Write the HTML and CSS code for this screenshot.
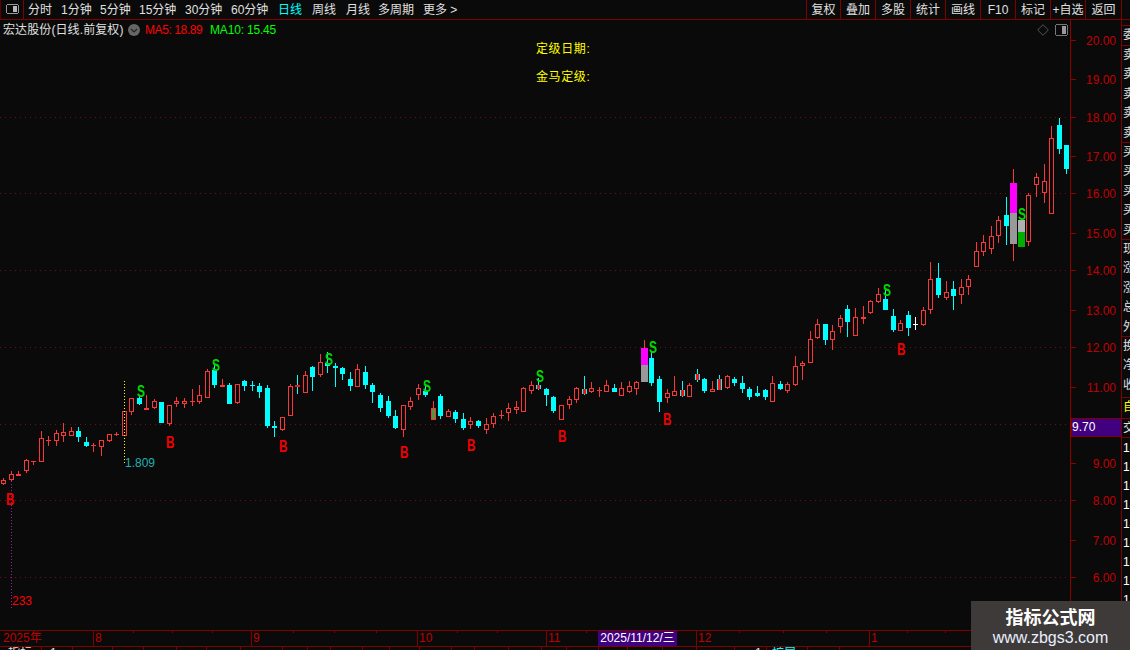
FILE: index.html
```html
<!DOCTYPE html>
<html lang="zh-CN">
<head>
<meta charset="utf-8">
<title>宏达股份 日线</title>
<link rel="stylesheet" href="styles.css">
</head>
<body>
<div class="page">
  <header class="toolbar">
    <div class="toggle-cell">
      <svg class="toggle" width="13" height="10" viewBox="0 0 13 10"><rect x="0.5" y="0.5" width="12" height="9" rx="2" fill="none" stroke="#999"/><rect x="7" y="2" width="4" height="6" fill="#b8b8b8"/></svg>
    </div>
    <nav class="periods">
      <span>分时</span><span>1分钟</span><span>5分钟</span><span>15分钟</span><span>30分钟</span><span>60分钟</span><span class="active">日线</span><span>周线</span><span>月线</span><span>多周期</span><span>更多 &gt;</span>
    </nav>
    <nav class="actions">
      <span>复权</span><span>叠加</span><span>多股</span><span>统计</span><span>画线</span><span>F10</span><span>标记</span><span>+自选</span><span>返回</span>
    </nav>
  </header>
  <div class="body">
    <div class="left">
      <main class="chart">
        <svg id="canvas" class="canvas" width="1121" height="610" viewBox="0 20 1121 610"></svg>
        <div class="legend">
          <span class="name">宏达股份(日线.前复权)</span>
          <svg class="drop" width="12" height="12" viewBox="0 0 12 12"><circle cx="6" cy="6" r="6" fill="#666"/><path d="M3 5l3 3 3-3" fill="none" stroke="#222" stroke-width="1.2"/></svg>
          <span class="ma5">MA5: 18.89</span>
          <span class="ma10">MA10: 15.45</span>
        </div>
        <div class="notes">
          <p>定级日期:</p>
          <p>金马定级:</p>
        </div>
        <div class="chart-tools">
          <svg width="12" height="12" viewBox="0 0 12 12"><path d="M6 .7L11.3 6 6 11.3 .7 6z" fill="none" stroke="#555"/></svg>
          <svg width="13" height="12" viewBox="0 0 13 12"><rect x="0.5" y="0.5" width="12" height="11" rx="2" fill="none" stroke="#777"/><rect x="7" y="2" width="4" height="8" fill="#999"/></svg>
        </div>
      </main>
      <div class="time">
        <span class="cell first">2025年</span><span class="cell">8</span><span class="cell">9</span><span class="cell">10</span><span class="cell">11</span><span class="cell now">2025/11/12/三</span><span class="cell blank"></span><span class="cell">12</span><span class="cell">1</span>
        <svg id="ticks" class="ticks" width="1121" height="3"></svg>
      </div>
      <div class="tabs">
        <span>指标</span><span>1</span><span></span><span></span><span></span><span></span><span></span><span></span><span></span><span></span><span></span><span></span><span></span><span></span><span></span><span></span><span></span><span></span><span></span><span></span><span></span><span></span><span></span><span class="tip">1</span><span class="cy">扩展</span><span></span>
      </div>
    </div>
    <aside class="side">
      <div class="sec s0"></div>
      <div class="sec s1"><p>委比</p></div>
      <div class="sec s2"><p>卖五</p><p>卖四</p><p>卖三</p><p>卖二</p><p>卖一</p></div>
      <div class="sec s2"><p>买一</p><p>买二</p><p>买三</p><p>买四</p><p>买五</p></div>
      <div class="sec s2"><p>现价</p><p>涨跌</p><p>涨幅</p><p>总手</p><p>外盘</p></div>
      <div class="sec s3"><p>换手</p><p>净资</p><p>收益</p></div>
      <div class="sec s4"><p class="yl">自选</p></div>
      <div class="sec s5"><p>交易</p></div>
      <div class="list"><p>14:50</p><p>14:51</p><p>14:52</p><p>14:53</p><p>14:54</p><p>14:55</p><p>14:56</p><p>14:57</p><p>14:58</p><p>14:59</p></div>
    </aside>
  </div>
  <div class="mark">
    <strong>指标公式网</strong>
    <span>www.zbgs3.com</span>
  </div>
</div>
<script src="chart.js"></script>
</body>
</html>
```
FILE: styles.css
```css
* { box-sizing: border-box; }
html, body { margin: 0; padding: 0; background: #0a0a0a; }
body { font: 12px/1 "Liberation Sans", "Noto Sans CJK SC", sans-serif; color: #e0e0e0; overflow: hidden; }
p { margin: 0; }
.page { position: relative; width: 1130px; height: 650px; overflow: hidden; }

.toolbar { display: flex; height: 20px; border-bottom: 1px solid #800000; }
.toggle-cell { width: 24px; display: flex; align-items: center; justify-content: center; padding-bottom: 1px; border-left: 1px solid #600000; border-right: 1px solid #800000; }
.periods { display: grid; grid-template-columns: 33px 39px 39px 46px 46px 47px 34px 34px 32px 45px 40px; margin-left: 4px; line-height: 20px; }
.periods .active { color: #00ffff; }
.actions { display: grid; grid-template-columns: 34px 35px 35px 35px 35px 35px 35px 35px 37px; margin-left: auto; margin-right: 8px; line-height: 20px; text-align: center; }
.actions span { border-left: 1px solid #800000; white-space: nowrap; }
.actions span:last-child { border-right: 1px solid #800000; }

.body { display: flex; height: 630px; }
.left { width: 1121px; }
.chart { position: relative; height: 610px; }
.canvas { position: absolute; left: 0; top: 0; }
.legend { position: relative; display: flex; align-items: center; height: 19px; padding-left: 3px; }
.name { width: 125px; white-space: nowrap; letter-spacing: .1px; }
.drop { margin-right: 5px; }
.ma5 { width: 65px; color: #ff0000; white-space: nowrap; letter-spacing: -.4px; }
.ma10 { color: #00ff00; letter-spacing: -.18px; white-space: nowrap; }
.notes { position: relative; margin: 4px 0 0 536px; color: #ffff00; line-height: 12px; letter-spacing: .6px; }
.notes p + p { margin-top: 16px; }
.chart-tools { position: absolute; top: 4px; left: 1037px; display: flex; gap: 6px; }

.time { position: relative; display: grid; grid-template-columns: 93px 158px 166px 129px 52px 79px 19px 173px 252px; height: 17px; border-top: 1px solid #800000; border-bottom: 1px solid #800000; color: #c00000; line-height: 15px; }
.cell { border-left: 1px solid #800000; padding-left: 1px; }
.cell.first { border-left: 0; padding-left: 3px; }
.cell.now { background: #400080; color: #fff; text-align: center; padding: 0; white-space: nowrap; border: 0; }
.cell.blank { border-left: 0; }
.ticks { position: absolute; left: 0; top: 0; }

.tabs { display: grid; grid-template-columns: 42px 31px 40px 31px 33px 30px 34px 42px 25px 23px 32px 27px 30px 32px 23px 34px 33px 25px 32px 29px 35px 34px 38px 32px 41px 32px 31px; height: 3px; overflow: hidden; line-height: 13px; }
.tabs span { border-right: 1px solid #800000; padding-left: 8px; white-space: nowrap; overflow: hidden; }
.tabs .tip { padding-left: 20px; }
.tabs .cy { color: #00ffff; padding-left: 5px; }

.side { width: 9px; height: 630px; border-left: 1px solid #800000; overflow: hidden; line-height: 19.4px; padding-left: 1px; white-space: nowrap; }
.sec { border-bottom: 1px solid #800000; overflow: hidden; margin-left: -1px; padding-left: 1px; }
.s0 { height: 6px; }
.s1 { height: 20px; }
.s2 { height: 97px; }
.s3 { height: 61px; }
.s4 { height: 21px; }
.s5 { height: 19px; }
.yl { color: #ffff00; }
.list { line-height: 19px; color: #fff; padding-top: 1px; }

.mark { position: absolute; left: 971px; top: 601px; width: 159px; height: 49px; background: #3f3a3a; color: #fff; text-align: center; }
.mark strong { display: block; margin-top: 5px; font-size: 18px; line-height: 20px; font-family: "Noto Sans CJK SC", sans-serif; }
.mark span { display: block; margin-top: 2px; font-size: 16px; line-height: 20px; color: #e8f0ff; }
```
FILE: chart.js
```js
// kind, bodyTop, bodyBottom, wickTop, wickBottom (screen y)
var D = [
['r',480,484,478,485],['r',474,480,471,481],['f',474,476,471,476],['r',460,471,459,473],['f',461,462,461,465],
['r',438,462,431,462],['f',440,441,436,446],['r',433,441,430,446],['r',432,436,423,442],['r',431,436,427,436],
['c',431,437,427,442],['c',442,446,437,447],['f',445,446,443,452],['r',440,447,440,456],['r',434,441,434,442],
['f',434,435,432,436],['r',411,436,411,436],['r',398,412,398,415],['c',398,404,396,405],['f',408,410,395,410],
['r',401,408,399,409],['c',402,423,402,423],['r',405,424,405,426],['r',401,404,397,407],['r',401,404,398,408],
['f',401,402,389,406],['r',395,402,385,404],['r',371,398,369,398],['c',370,385,365,388],['f',385,387,379,387],
['c',385,404,383,404],['r',384,403,384,404],['c',381,386,380,391],['c',385,386,381,391],['c',386,392,383,398],
['c',388,426,385,428],['c',426,428,421,437],['r',417,430,417,431],['r',386,416,384,416],['p',385,387,375,394],
['r',375,393,371,393],['c',367,377,366,391],['r',362,375,354,377],['c',363,366,352,373],['c',366,368,363,387],
['c',368,374,367,380],['c',379,386,372,391],['r',369,387,364,387],['c',372,385,366,389],['c',385,392,383,403],
['c',395,408,393,412],['c',401,416,396,418],['c',416,428,410,429],['r',405,430,405,437],['r',401,407,397,410],
['r',388,395,384,400],['c',391,395,386,397],['g',408,420,401,420],['c',396,416,394,419],['r',411,417,409,417],
['c',412,419,410,423],['c',419,428,413,430],['r',421,425,417,429],['c',421,426,420,428],['r',424,430,418,434],
['r',416,424,413,428],['f',415,416,410,419],['r',408,413,403,421],['r',407,410,401,414],['r',388,412,387,412],
['r',385,391,381,394],['x',385,389,378,390],['c',389,395,388,406],['c',397,411,396,413],['r',405,420,405,420],
['r',399,405,396,409],['r',388,400,387,403],['x',389,394,376,395],['r',388,392,382,393],['f',390,391,387,397],
['r',385,392,380,392],['c',388,392,384,392],['r',388,396,382,396],['r',386,392,381,393],['r',382,389,381,395],
['m',348,382,340,382],['c',358,383,352,386],['c',379,402,376,412],['r',393,398,389,403],['r',391,396,376,396],
['x',390,396,381,397],['r',385,397,383,397],['x',374,380,369,382],['c',379,391,378,393],['r',389,392,381,392],
['x',379,390,375,390],['r',376,388,375,389],['c',379,383,377,386],['c',383,389,376,393],['c',389,397,387,400],
['c',393,396,386,397],['c',390,397,389,400],['r',383,402,376,402],['c',384,389,381,390],['r',384,391,382,393],
['r',366,385,356,386],['r',363,366,361,380],['r',339,363,331,363],['r',324,338,319,339],['c',324,340,324,345],
['r',331,340,325,350],['r',318,327,315,333],['c',309,322,305,337],['r',317,336,308,336],['f',317,319,306,324],
['r',301,313,300,314],['r',294,302,288,303],['c',299,310,289,310],['c',316,330,309,332],['r',323,331,320,331],
['c',315,328,311,336],['w',324,325,317,330],['r',310,325,307,326],['r',279,310,262,314],['c',278,295,263,298],
['r',292,298,281,300],['c',289,296,281,310],['r',287,295,279,304],['r',279,287,275,295],['r',251,267,242,267],
['r',242,252,235,256],['r',236,249,226,254],['r',220,236,216,243],['c',215,226,197,245],['m',183,244,169,261],
['n',220,247,220,247],['r',195,242,193,246],['r',177,185,173,197],['r',181,193,164,203],['r',138,214,126,214],
['c',125,149,118,154],['c',145,169,145,174]
];
var RED = '#f83838', CY = '#00ffff', BG = '#0a0a0a', AX = '#8c0000';
var out = [];
function rect(x, y, w, h, c) { out.push('<rect x="'+x+'" y="'+y+'" width="'+w+'" height="'+h+'" fill="'+c+'"/>'); }
function txt(x, y, s, c, extra) { out.push('<text x="'+x+'" y="'+y+'" fill="'+c+'" '+(extra||'')+'>'+s+'</text>'); }

// grid
[117,193,270,347,424,500,577].forEach(function (y) {
  out.push('<line x1="0" x2="1067" y1="'+(y+.5)+'" y2="'+(y+.5)+'" stroke="#701010" stroke-dasharray="1 4"/>');
});
// axis
rect(1070, 20, 1, 610, AX);
[[40,'20.00'],[79,'19.00'],[117,'18.00'],[156,'17.00'],[193,'16.00'],[233,'15.00'],[270,'14.00'],[310,'13.00'],[347,'12.00'],[387,'11.00'],[463,'9.00'],[500,'8.00'],[540,'7.00'],[577,'6.00']].forEach(function (p) {
  rect(1070, p[0], 6, 1, AX);
  txt(1116, p[0]+5, p[1], '#c00000', 'text-anchor="end" class="t"');
});
// guide lines
out.push('<line x1="11.5" x2="11.5" y1="481" y2="608" stroke="#a020a0" stroke-dasharray="1 2"/>');
// candles
D.forEach(function (d, i) {
  var k = d[0], t = d[1], b = d[2], wt = d[3], wb = d[4];
  var c = Math.floor(3.5 + 7.54 * i);
  var h = b - t;
  if (k === 'r' || k === 'f') {
    rect(c, wt, 1, wb - wt, RED);
    if (h <= 2 || k === 'f') rect(c-2, t, 5, Math.max(h,1), RED);
    else { rect(c-2, t, 5, h, RED); rect(c-1, t+1, 3, h-2, BG); }
  } else if (k === 'c') {
    rect(c, wt, 1, wb - wt, CY);
    rect(c-2, t, 5, Math.max(h,1), CY);
  } else if (k === 'x') {
    rect(c, wt, 1, wb - wt, CY);
    rect(c-2, t, 5, h, CY);
    rect(c-1, t, 3, h, '#ff1010');
  } else if (k === 'p') {
    rect(c, wt, 1, wb - wt, CY);
    rect(c-2, t, 5, h, '#ff1010');
  } else if (k === 'w') {
    rect(c, wt, 1, wb - wt, '#fff');
    rect(c-2, t, 5, 1, '#fff');
  } else if (k === 'g') {
    rect(c, wt, 1, wb - wt, RED);
    rect(c-2, t, 5, h, RED);
    rect(c-1, t+1, 3, h-2, '#4a9a3a');
  } else if (k === 'm') {
    rect(c, wt, 1, wb - wt, RED);
    var mid = (i === 85) ? 365 : 213;
    rect(c-3, t, 7, mid-t, '#ff00ff');
    rect(c-3, mid, 7, b-mid, '#999999');
  } else if (k === 'n') {
    rect(c-3, 220, 7, 12, '#b0b0b0');
    rect(c-3, 232, 7, 15, '#00b000');
  }
});
out.push('<line x1="124.5" x2="124.5" y1="381" y2="464" stroke="#ffff00" stroke-dasharray="1 2"/>');
// price cursor box
rect(1071, 419, 50, 17, '#400080');
out.push('<rect x="1071.5" y="418.5" width="50" height="18" fill="none" stroke="#800000"/>');
txt(1072, 431, '9.70', '#fff', 'class="t"');
// labels
txt(125, 467, '1.809', '#20b0b0', 'class="t"');
txt(12, 605, '233', '#ff0000', 'class="t"');
[[6,505],[166,448],[279,452],[400,458],[467,451],[558,442],[663,425],[897,355]].forEach(function (p) {
  txt(p[0], p[1], 'B', '#f00000', 'class="sig" textLength="8.5" lengthAdjust="spacingAndGlyphs"');
});
[[137,397],[212,371],[325,365],[423,392],[536,382],[649,353],[883,296],[1018,220]].forEach(function (p) {
  txt(p[0], p[1], 'S', '#00d800', 'class="sig" textLength="8" lengthAdjust="spacingAndGlyphs"');
});
var svg = document.getElementById('canvas');
svg.innerHTML = '<style>text{font:12px "Liberation Sans",sans-serif}text.sig{font-size:16.5px;font-weight:bold}rect,line{shape-rendering:crispEdges}</style>' + out.join('');

var tk = '';
[133,172,212,293,334,376,457,497,586,626,739,783,826,907,945].forEach(function (x) {
  tk += '<rect x="'+x+'" y="0" width="1" height="2" fill="#800000" shape-rendering="crispEdges"/>';
});
document.getElementById('ticks').innerHTML = tk;
```
